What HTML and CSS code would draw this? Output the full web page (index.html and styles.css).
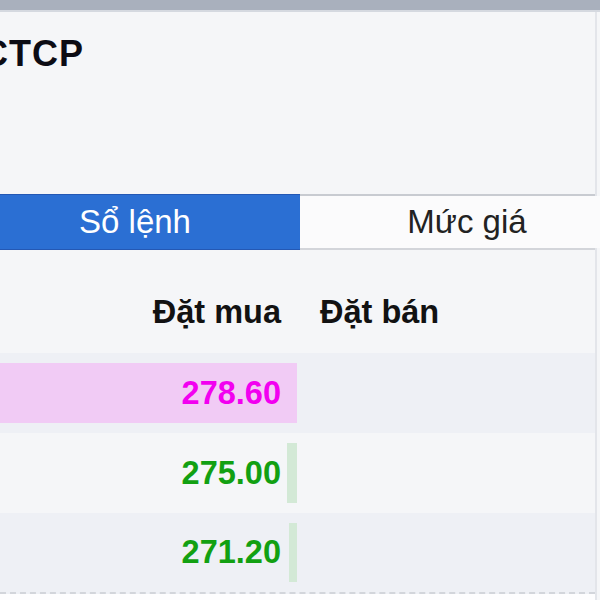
FILE: index.html
```html
<!DOCTYPE html>
<html lang="vi">
<head>
<meta charset="utf-8">
<title>Sổ lệnh</title>
<link rel="stylesheet" href="styles.css">
</head>
<body>
<div class="topbar"></div>
<div class="panel">
  <div class="title">CTCP</div>
  <div class="tabs">
    <div class="tab active">Sổ lệnh</div>
    <div class="tab">Mức giá</div>
  </div>
  <div class="colhead">
    <div class="buy">Đặt mua</div>
    <div class="sell">Đặt bán</div>
  </div>
  <div class="row odd">
    <div class="buy cell ceiling"><span class="bar" style="width:100%"></span><span class="num">278.60</span></div>
    <div class="sell cell"></div>
  </div>
  <div class="row">
    <div class="buy cell up"><span class="bar" style="width:10px"></span><span class="num">275.00</span></div>
    <div class="sell cell"></div>
  </div>
  <div class="row odd last">
    <div class="buy cell up"><span class="bar" style="width:8px"></span><span class="num">271.20</span></div>
    <div class="sell cell"></div>
  </div>
  <div class="footer"></div>
</div>
</body>
</html>
```

FILE: styles.css
```css
html, body {
  margin: 0;
  padding: 0;
}
body {
  background: #f5f6f8;
  font-family: "Liberation Sans", Arial, sans-serif;
  color: #111;
  width: 600px;
  height: 600px;
  overflow: hidden;
}
.topbar {
  height: 10px;
  background: #a9b0bd;
  border-bottom: 2px solid #d5d9e0;
}
.panel {
  width: 595px;
  border-right: 2px solid #e3e5ea;
  background: #f5f6f8;
}
.title {
  height: 182px;
  box-sizing: border-box;
  padding-top: 24px;
  margin-left: -18px;
  font-size: 36px;
  font-weight: bold;
  line-height: 36px;
  letter-spacing: 1px;
  color: #0c0c14;
  white-space: nowrap;
}
.tabs {
  display: grid;
  grid-template-columns: 330px 334px;
  margin-left: -30px;
  height: 56px;
  box-sizing: border-box;
  border-top: 2px solid #c8cbd1;
  border-bottom: 2px solid #d3d5da;
}
.tab {
  display: flex;
  align-items: center;
  justify-content: center;
  font-size: 33px;
  color: #222;
  background: #fbfbfc;
}
.tab.active {
  background: #2b6fd3;
  color: #fff;
  border-top: 1px solid #2458b4;
  border-bottom: 1px solid #2458b4;
  margin: -2px 0;
}
.colhead {
  display: grid;
  grid-template-columns: 297px 1fr;
  height: 103px;
  align-items: center;
  font-size: 32.5px;
  font-weight: bold;
  color: #121212;
  padding-top: 22px;
  box-sizing: border-box;
}
.colhead .buy {
  text-align: right;
  padding-right: 16px;
}
.colhead .sell {
  padding-left: 23px;
}
.row {
  display: grid;
  grid-template-columns: 297px 1fr;
  height: 80px;
  background: #f5f6f8;
}
.row.odd {
  background: #eef0f5;
}
.row.last {
  height: 79px;
  border-bottom: 2px dashed #d2d5db;
}
.cell.buy {
  position: relative;
  margin: 10px 0;
  display: flex;
  align-items: center;
  justify-content: flex-end;
  padding-right: 16px;
  font-size: 32.5px;
  font-weight: bold;
}
.bar {
  position: absolute;
  top: 0;
  bottom: 0;
  right: 0;
}
.ceiling .bar {
  background: #f1cbf5;
}
.up .bar {
  background: #d3e9d6;
}
.num {
  position: relative;
}
.ceiling .num {
  color: #f200f0;
}
.up .num {
  color: #12a012;
}
.footer {
  height: 10px;
  background: #fdfdfe;
}
```
